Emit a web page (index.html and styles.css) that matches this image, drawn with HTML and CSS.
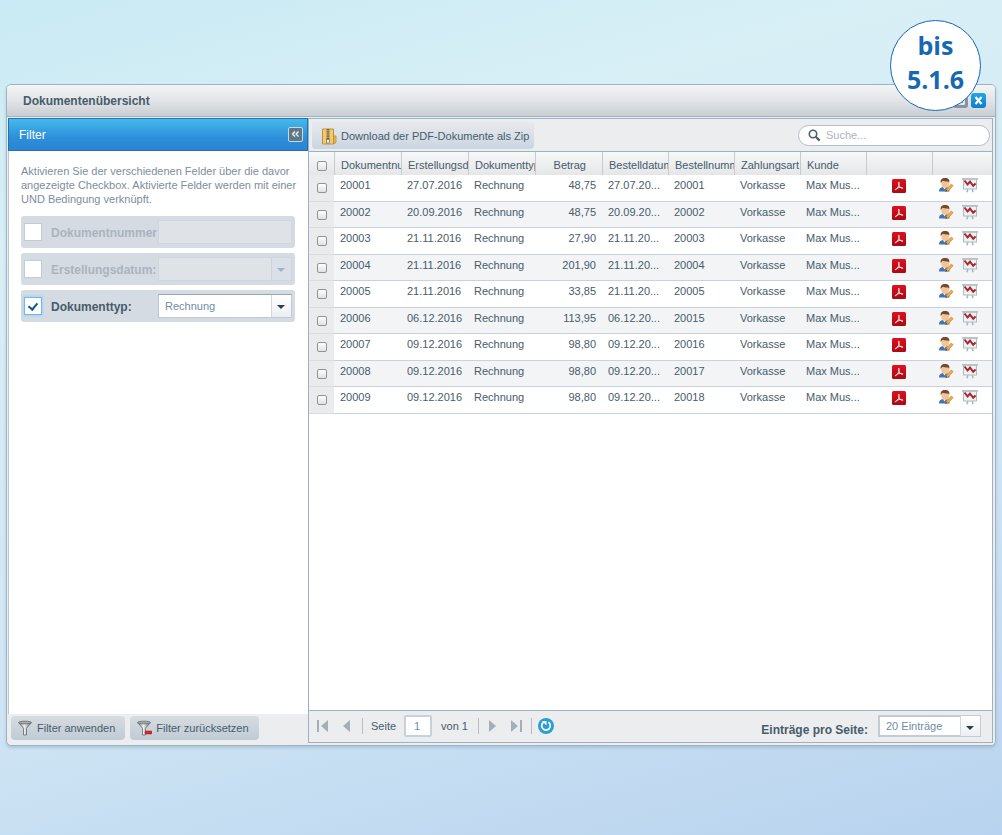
FILE: index.html
```html
<!DOCTYPE html>
<html lang="de">
<head>
<meta charset="utf-8">
<title>Dokumentenübersicht</title>
<link rel="stylesheet" href="styles.css">
</head>
<body>
<svg class="sprite" aria-hidden="true">
  <defs>
    <linearGradient id="g-red" x1="0" y1="0" x2="0" y2="1"><stop offset="0" stop-color="#e0101c"/><stop offset="1" stop-color="#a80a14"/></linearGradient>
    <linearGradient id="g-metal" x1="0" y1="0" x2="1" y2="0"><stop offset="0" stop-color="#7c8084"/><stop offset=".45" stop-color="#eceef0"/><stop offset="1" stop-color="#6c7074"/></linearGradient>
    <symbol id="pdf" viewBox="0 0 14 14">
      <rect width="14" height="14" rx="1.5" fill="url(#g-red)"/>
      <path d="M6.7 3.2C7.5 3 7.4 5 6.8 6.6C6 8.600 4.500 10.700 3.400 10.900C2.700 10.600 4.600 9.100 6.900 8.600C9.200 8.100 11.300 8.500 10.900 9.300C10.200 9.900 8.100 8.700 7.200 6.900C6.500 5.500 6.100 3.600 6.700 3.200Z" fill="none" stroke="#fff" stroke-width=".8"/>
    </symbol>
    <symbol id="user" viewBox="0 0 16 16">
      <path d="M1 14.500C1 11.500 2.500 10.500 5 10H8C10.500 10.500 11.500 11.500 11.500 14.500Z" fill="#3f74b5"/>
      <path d="M4.800 9.800L6.500 12.500L8.500 9.800Z" fill="#e8eef5"/>
      <ellipse cx="7.200" cy="6.600" rx="3.900" ry="4.200" fill="#f3c596"/>
      <path d="M2.800 6C2 2.700 4 1 7 1C10.500 1 12 3 11.200 5.800L10.300 4.400C8 4.700 6 4.400 4.700 3.700C4 4.500 3.500 5 2.800 6Z" fill="#74492a"/>
      <path d="M7.500 14.800L8.600 11.800L13.300 7L15.200 8.700L10.600 13.500Z" fill="#eeaa4a" stroke="#b8732a" stroke-width=".5"/>
      <path d="M7.500 14.800L8.100 13.100L9.200 14.100Z" fill="#4b3b2c"/>
    </symbol>
    <symbol id="board" viewBox="0 0 16 16">
      <path d="M5.800 12L5 15.200M10.200 12L11 15.200" stroke="#a9b9be" stroke-width="1.600"/>
      <rect x="1.500" y="2" width="13" height="10" fill="#eaf2f3" stroke="#a9bec3"/>
      <rect x="0" y="1" width="16" height="1.700" fill="#b3c2c7"/>
      <path d="M2.500 3.500L5.600 7.500L8 4.600L11.200 8.800L13.600 6.500" fill="none" stroke="#b0242c" stroke-width="2"/>
    </symbol>
    <symbol id="funnel" viewBox="0 0 16 16">
      <path d="M1.800 2.800L6.500 8.300V15H9.500V8.300L14.200 2.800Z" fill="url(#g-metal)" stroke="#66696d" stroke-width=".8"/>
      <ellipse cx="8" cy="2.500" rx="6.500" ry="1.300" fill="#a9aeb3" stroke="#66696d" stroke-width=".8"/>
    </symbol>
  </defs>
</svg>

<main class="window">
  <header class="titlebar">
    <h1>Dokumentenübersicht</h1>
    <div class="tools">
      <button class="tool tool-max" type="button" aria-label="Maximieren"><svg width="15" height="15" viewBox="0 0 15 15"><path d="M4 4.500H11V11H4Z" fill="none" stroke="#fff" stroke-width="1.500"/></svg></button>
      <button class="tool tool-close" type="button" aria-label="Schließen"><svg width="15" height="15" viewBox="0 0 15 15"><path d="M4.500 4L10.500 11M10.500 4L4.500 11" stroke="#fff" stroke-width="2.200"/></svg></button>
    </div>
    <div class="badge">bis<br>5.1.6</div>
  </header>

  <div class="content">
    <aside class="filter">
      <div class="filter-head">
        <h2>Filter</h2>
        <button class="collapse" type="button" aria-label="Einklappen"><svg width="11" height="11" viewBox="0 0 11 11"><path d="M5 2.500L2.500 5L5 7.500M8.500 2.500L6 5L8.500 7.500" fill="none" stroke="#fff" stroke-width="1.200"/></svg></button>
      </div>
      <div class="filter-body">
        <p>Aktivieren Sie der verschiedenen Felder über die davor angezeigte Checkbox. Aktivierte Felder werden mit einer UND Bedingung verknüpft.</p>
        <div class="field off">
          <input class="check" type="checkbox" aria-label="Dokumentnummer aktivieren">
          <label for="f-nr">Dokumentnummer</label>
          <span class="control"><input id="f-nr" type="text" disabled></span>
        </div>
        <div class="field off">
          <input class="check" type="checkbox" aria-label="Erstellungsdatum aktivieren">
          <label for="f-date">Erstellungsdatum:</label>
          <span class="control drop"><select id="f-date" disabled><option></option></select></span>
        </div>
        <div class="field">
          <input class="check" type="checkbox" aria-label="Dokumenttyp aktivieren" checked>
          <label for="f-type">Dokumenttyp:</label>
          <span class="control drop"><select id="f-type"><option>Rechnung</option></select></span>
        </div>
      </div>
      <div class="filter-foot">
        <button class="btn" type="button"><svg width="16" height="16"><use href="#funnel"/></svg>Filter anwenden</button>
        <button class="btn" type="button"><svg width="16" height="16" viewBox="0 0 16 16"><use href="#funnel" width="16" height="16"/><rect x="9" y="11" width="7" height="3" rx="1" fill="#d8262e" stroke="#9c1118" stroke-width=".5"/></svg>Filter zurücksetzen</button>
      </div>
    </aside>

    <section class="grid">
      <div class="toolbar">
        <button class="btn btn-zip" type="button">
          <svg width="16" height="17" viewBox="0 0 16 17"><path d="M1.500 1H12.500V16H1.500Z" fill="#f0cb6b" stroke="#c2923a"/><path d="M12.500 8H15V14.500L12.500 16Z" fill="#e9b84c" stroke="#b98a33" stroke-width=".8"/><path d="M5 1H9V16H5Z" fill="#d9b55c"/><path d="M7 1V12" stroke="#5f5a50" stroke-width="2.500" stroke-dasharray="1.200 1"/><rect x="5.500" y="11.500" width="3" height="3.500" fill="#eee" stroke="#77705f" stroke-width=".7"/></svg>
          Download der PDF-Dokumente als Zip</button>
        <label class="search">
          <svg width="13" height="13" viewBox="0 0 13 13"><circle cx="5" cy="5" r="3.700" fill="none" stroke="#4e5d68" stroke-width="1.600"/><path d="M7.800 7.800L11.600 11.600" stroke="#4e5d68" stroke-width="2.200"/></svg>
          <input type="search" placeholder="Suche..." aria-label="Suche">
        </label>
      </div>

      <div class="rows">
        <table>
          <colgroup><col class="c-check"><col class="c-a"><col class="c-a"><col class="c-a"><col class="c-a"><col class="c-b"><col class="c-b"><col class="c-b"><col class="c-b"><col class="c-b"><col></colgroup>
          <thead>
            <tr><th class="sel"><input type="checkbox" aria-label="Alle auswählen"></th><th>Dokumentnu</th><th>Erstellungsd</th><th>Dokumenttyp</th><th class="num">Betrag</th><th>Bestelldatum</th><th>Bestellnumm</th><th>Zahlungsart</th><th>Kunde</th><th></th><th></th></tr>
          </thead>
          <tbody>
            <tr><td class="sel"><input type="checkbox" aria-label="20001 auswählen"></td><td>20001</td><td>27.07.2016</td><td>Rechnung</td><td class="num">48,75</td><td>27.07.20...</td><td>20001</td><td>Vorkasse</td><td>Max Mus...</td><td class="icons"><svg width="14" height="14"><use href="#pdf"/></svg></td><td class="icons pair"><svg width="16" height="16"><use href="#user"/></svg><svg width="16" height="16"><use href="#board"/></svg></td></tr>
            <tr><td class="sel"><input type="checkbox" aria-label="20002 auswählen"></td><td>20002</td><td>20.09.2016</td><td>Rechnung</td><td class="num">48,75</td><td>20.09.20...</td><td>20002</td><td>Vorkasse</td><td>Max Mus...</td><td class="icons"><svg width="14" height="14"><use href="#pdf"/></svg></td><td class="icons pair"><svg width="16" height="16"><use href="#user"/></svg><svg width="16" height="16"><use href="#board"/></svg></td></tr>
            <tr><td class="sel"><input type="checkbox" aria-label="20003 auswählen"></td><td>20003</td><td>21.11.2016</td><td>Rechnung</td><td class="num">27,90</td><td>21.11.20...</td><td>20003</td><td>Vorkasse</td><td>Max Mus...</td><td class="icons"><svg width="14" height="14"><use href="#pdf"/></svg></td><td class="icons pair"><svg width="16" height="16"><use href="#user"/></svg><svg width="16" height="16"><use href="#board"/></svg></td></tr>
            <tr><td class="sel"><input type="checkbox" aria-label="20004 auswählen"></td><td>20004</td><td>21.11.2016</td><td>Rechnung</td><td class="num">201,90</td><td>21.11.20...</td><td>20004</td><td>Vorkasse</td><td>Max Mus...</td><td class="icons"><svg width="14" height="14"><use href="#pdf"/></svg></td><td class="icons pair"><svg width="16" height="16"><use href="#user"/></svg><svg width="16" height="16"><use href="#board"/></svg></td></tr>
            <tr><td class="sel"><input type="checkbox" aria-label="20005 auswählen"></td><td>20005</td><td>21.11.2016</td><td>Rechnung</td><td class="num">33,85</td><td>21.11.20...</td><td>20005</td><td>Vorkasse</td><td>Max Mus...</td><td class="icons"><svg width="14" height="14"><use href="#pdf"/></svg></td><td class="icons pair"><svg width="16" height="16"><use href="#user"/></svg><svg width="16" height="16"><use href="#board"/></svg></td></tr>
            <tr><td class="sel"><input type="checkbox" aria-label="20006 auswählen"></td><td>20006</td><td>06.12.2016</td><td>Rechnung</td><td class="num">113,95</td><td>06.12.20...</td><td>20015</td><td>Vorkasse</td><td>Max Mus...</td><td class="icons"><svg width="14" height="14"><use href="#pdf"/></svg></td><td class="icons pair"><svg width="16" height="16"><use href="#user"/></svg><svg width="16" height="16"><use href="#board"/></svg></td></tr>
            <tr><td class="sel"><input type="checkbox" aria-label="20007 auswählen"></td><td>20007</td><td>09.12.2016</td><td>Rechnung</td><td class="num">98,80</td><td>09.12.20...</td><td>20016</td><td>Vorkasse</td><td>Max Mus...</td><td class="icons"><svg width="14" height="14"><use href="#pdf"/></svg></td><td class="icons pair"><svg width="16" height="16"><use href="#user"/></svg><svg width="16" height="16"><use href="#board"/></svg></td></tr>
            <tr><td class="sel"><input type="checkbox" aria-label="20008 auswählen"></td><td>20008</td><td>09.12.2016</td><td>Rechnung</td><td class="num">98,80</td><td>09.12.20...</td><td>20017</td><td>Vorkasse</td><td>Max Mus...</td><td class="icons"><svg width="14" height="14"><use href="#pdf"/></svg></td><td class="icons pair"><svg width="16" height="16"><use href="#user"/></svg><svg width="16" height="16"><use href="#board"/></svg></td></tr>
            <tr><td class="sel"><input type="checkbox" aria-label="20009 auswählen"></td><td>20009</td><td>09.12.2016</td><td>Rechnung</td><td class="num">98,80</td><td>09.12.20...</td><td>20018</td><td>Vorkasse</td><td>Max Mus...</td><td class="icons"><svg width="14" height="14"><use href="#pdf"/></svg></td><td class="icons pair"><svg width="16" height="16"><use href="#user"/></svg><svg width="16" height="16"><use href="#board"/></svg></td></tr>
          </tbody>
        </table>
      </div>

      <div class="pager">
        <button class="nav" type="button" aria-label="Erste Seite"><svg width="14" height="14" viewBox="0 0 14 14"><path d="M1 1H3V13H1ZM12 1V13L5 7Z" fill="#a3afb8"/></svg></button>
        <button class="nav" type="button" aria-label="Vorherige Seite"><svg width="14" height="14" viewBox="0 0 14 14"><path d="M10 1V13L3 7Z" fill="#a3afb8"/></svg></button>
        <span class="sep"></span>
        <label class="page">Seite <input type="text" value="1"></label>
        <span class="total">von 1</span>
        <span class="sep"></span>
        <button class="nav" type="button" aria-label="Nächste Seite"><svg width="14" height="14" viewBox="0 0 14 14"><path d="M4 1V13L11 7Z" fill="#a3afb8"/></svg></button>
        <button class="nav" type="button" aria-label="Letzte Seite"><svg width="14" height="14" viewBox="0 0 14 14"><path d="M2 1V13L9 7ZM11 1H13V13H11Z" fill="#a3afb8"/></svg></button>
        <span class="sep"></span>
        <button class="nav" type="button" aria-label="Aktualisieren"><svg width="16" height="16" viewBox="0 0 16 16"><circle cx="8" cy="8" r="8" fill="#2a9fd6"/><path d="M5.500 4.300A4.300 4.300 0 1 0 10.500 4.300" fill="none" stroke="#fff" stroke-width="1.700"/><path d="M4 3H8.500V7.500Z" fill="#fff"/></svg></button>
        <label class="size" for="size">Einträge pro Seite:</label>
        <span class="control drop framed"><select id="size"><option>20 Einträge</option></select></span>
      </div>
    </section>
  </div>
</main>
</body>
</html>
```
FILE: styles.css
```css
*, ::before, ::after { box-sizing: border-box; }

body {
  margin: 0;
  min-height: 100vh;
  padding: 84px 6px 89px;
  display: flex;
  background: linear-gradient(165deg, #c9eaf4 0%, #d8eff6 22%, #cfe5f4 65%, #b8d3ef 100%);
  color: #475c6a;
  font: 11px/14px "Liberation Sans", Arial, sans-serif;
}

button, input, select { font: inherit; color: inherit; margin: 0; }
button { border: 0; padding: 0; background: none; }
svg { display: block; flex: none; }
h1, h2, p { margin: 0; }
.sprite { position: absolute; width: 0; height: 0; }

.window {
  flex: 1;
  min-width: 0;
  display: flex;
  flex-direction: column;
  border: 1px solid #9fb3c3;
  border-radius: 5px;
  background: #ebedef;
  box-shadow: 0 2px 3px #8da9c080;
}

.titlebar {
  position: relative;
  height: 32px;
  display: flex;
  align-items: center;
  justify-content: space-between;
  padding: 0 9px 0 16px;
  border-bottom: 1px solid #9fb0be;
  border-radius: 4px 4px 0 0;
  background: linear-gradient(#f3f4f5, #e2e4e7 50%, #c9ced4);
}
.titlebar h1 { font-size: 12px; line-height: 16px; }
.tools { display: flex; gap: 3px; }
.tool { border-radius: 3px; }
.tool-max { background: #8494a1; }
.tool-close { background: linear-gradient(#22a5ea, #0a7fce); }

.badge {
  position: absolute;
  right: 14px;
  top: -65px;
  width: 91px;
  height: 91px;
  padding-top: 7px;
  border: 1px solid #1668b3;
  border-radius: 50%;
  background: #fff;
  color: #1668b3;
  text-align: center;
  font: bold 25px/34px "Open Sans", "Noto Sans", sans-serif;
}

.content {
  flex: 1;
  display: flex;
  min-height: 0;
  margin: 1px 2px 2px 1px;
}

/* Filter panel */
.filter { width: 300px; flex: none; display: flex; flex-direction: column; }
.filter-head {
  height: 33px;
  display: flex;
  align-items: center;
  justify-content: space-between;
  padding: 0 4px 0 10px;
  border: 1px solid #2273b4;
  background: linear-gradient(#45b9e9, #2d8fd9 60%, #2a84d3);
  color: #fff;
}
.filter-head h2 { font-size: 12px; font-weight: normal; }
.collapse { padding: 1px; border: 1px solid #c3dcec; border-radius: 2px; background: #5f7889; }
.filter-body { flex: 1; padding: 13px 13px 0 12px; background: #fff; border-left: 1px solid #b9c8d4; }
.filter-body p { margin: 0 -6px 10px 0; color: #7c8e9c; }
.field {
  height: 32px;
  display: flex;
  align-items: center;
  margin-bottom: 5px;
  padding: 0 3px;
  border-radius: 3px;
  background: #d5dbe2;
}
.field label { width: 107px; padding-top: 2px; margin-left: 9px; font-size: 12px; font-weight: bold; white-space: nowrap; }
.off label { color: #aab4be; }
.check {
  appearance: none;
  width: 18px;
  height: 18px;
  flex: none;
  border: 1px solid #c3cbd3;
  background: #fff;
  display: grid;
  place-items: center;
}
.check:checked { border: 1px solid #6fb8ec; box-shadow: 0 0 2px 1px #a9d4f3; }
.check:checked::after {
  content: "";
  width: 6px;
  height: 9px;
  margin-bottom: 2px;
  border: solid #14568f;
  border-width: 0 2px 2px 0;
  transform: rotate(40deg);
}
.control { position: relative; flex: 1; height: 24px; display: flex; }
.control input, .control select {
  appearance: none;
  width: 100%;
  height: 100%;
  padding: 0 6px;
  border: 1px solid #c0c9d2;
  border-top-color: #97a5b1;
  border-radius: 0;
  background: #fff;
  color: #6f8da6;
  opacity: 1;
}
.off .control input, .off .control select { background: #dfe3e8; border-color: #cfd6dd; }
.drop::before {
  content: "";
  position: absolute;
  right: 1px;
  top: 1px;
  bottom: 1px;
  width: 20px;
  border-left: 1px solid #d2d9df;
  background: linear-gradient(#fff, #eceff2);
}
.drop::after {
  content: "";
  position: absolute;
  right: 7px;
  top: 11px;
  border: 4px solid transparent;
  border-top-color: #2f3d48;
  border-bottom: 0;
}
.off .drop::before { background: #d9e0e7; border-color: #cbd3db; }
.off .drop::after { border-top-color: #9fb3c4; }
.filter-foot { height: 29px; display: flex; align-items: center; gap: 5px; padding: 0 0 1px 3px; }
.btn {
  height: 24px;
  display: flex;
  align-items: center;
  gap: 4px;
  padding: 0 10px 0 6px;
  border-radius: 4px;
  background: linear-gradient(#d6dce1, #c1cbd5);
  white-space: nowrap;
}

/* Document grid */
.grid {
  flex: 1;
  min-width: 0;
  display: flex;
  flex-direction: column;
  border: 1px solid #9db1c1;
}
.toolbar {
  height: 33px;
  display: flex;
  align-items: center;
  justify-content: space-between;
  padding: 0 2px 0 3px;
  border-bottom: 1px solid #9db1c1;
}
.btn-zip { height: 28px; padding: 2px 5px 0 9px; background: linear-gradient(#e8ebee, #cad5e1); }
.search {
  width: 192px;
  height: 21px;
  display: flex;
  align-items: center;
  gap: 5px;
  padding: 0 9px;
  border: 1px solid #b3c0ca;
  border-radius: 11px;
  background: #fff;
}
.search input { flex: 1; min-width: 0; border: 0; padding: 0; outline: 0; background: none; }
.search input::placeholder { color: #a9b6c0; opacity: 1; }

.rows { flex: 1; background: #fff; }
table { width: 100%; table-layout: fixed; border-collapse: separate; border-spacing: 0; }
.c-check { width: 25px; }
.c-a { width: 67px; }
.c-b { width: 66px; }
th, td { overflow: hidden; white-space: nowrap; text-align: left; font-weight: normal; }
th {
  height: 23px;
  padding: 3px 0 0 6px;
  border-left: 1px solid #c3ccd3;
  background: linear-gradient(#f7f8f8, #e4e6e8);
}
td {
  height: 27px;
  padding: 3px 0 0 6px;
  border-bottom: 1px solid #c9d2da;
  vertical-align: top;
}
tbody tr:nth-child(even) td { height: 26px; background: #f2f4f6; }
.num { text-align: right; }
td.num { padding-right: 6px; }
th.num { padding-right: 16px; }
th.sel { border-left: 0; padding: 4px 0 0 8px; }
tbody tr td.sel { padding: 8px 0 0 8px; border-color: #d9dce0; background: #e9ebed; }
.sel input {
  appearance: none;
  display: block;
  width: 10px;
  height: 10px;
  border: 1px solid #8f9499;
  border-radius: 2px;
  background: linear-gradient(#fff, #dfe1e3);
}
td.icons { padding-top: 4px; padding-left: 26px; }
td.pair { padding: 2px 0 0 6px; }
.pair svg { display: inline-block; vertical-align: top; margin-right: 8px; }

.pager {
  height: 32px;
  display: flex;
  align-items: center;
  padding: 0 11px 2px 1px;
  border-top: 1px solid #9db1c1;
  white-space: nowrap;
}
.nav { margin: 0 4px 0 6px; }
.sep { width: 1px; height: 16px; margin-left: 4px; background: #b4bfc8; }
.page { display: flex; align-items: center; gap: 8px; margin-left: 8px; }
.page input {
  width: 28px;
  height: 22px;
  padding: 0 8px;
  border: 2px solid #c8d0d8;
  border-radius: 2px;
  background: #fff;
  color: #6f8da6;
}
.total { margin: 0 6px 0 9px; }
.size { margin: 9px 10px 0 auto; font-size: 12px; font-weight: bold; }
.framed { flex: none; width: 103px; height: 22px; }
.framed select { border: 2px solid #c3ccd5; }
```
